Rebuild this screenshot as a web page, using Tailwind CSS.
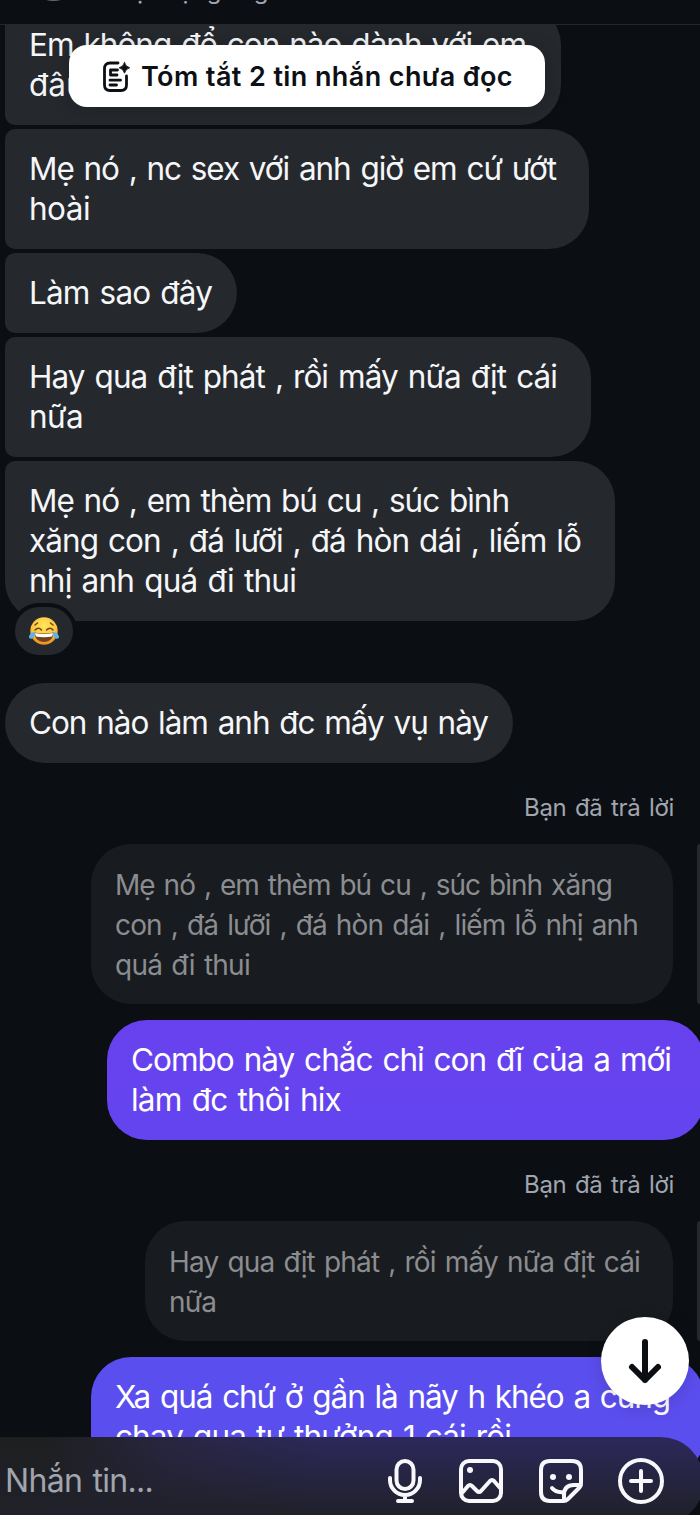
<!DOCTYPE html>
<html lang="vi">
<head>
<meta charset="utf-8">
<meta name="viewport" content="width=device-width, initial-scale=1">
<title>Tin nhắn</title>
<script src="https://cdn.jsdelivr.net/npm/@tailwindcss/browser@4"></script>
</head>
<body class="relative flex h-[1515px] w-[700px] flex-col overflow-hidden bg-[#0b0f14] font-['Inter','Noto_Sans',sans-serif] text-[31.5px] leading-[40px] [word-spacing:2px] text-[#f5f6f8]">
<header class="relative h-[25px] shrink-0 overflow-hidden border-b border-[#24282d]">
  <div class="absolute left-[26px] -top-[54px] size-[55px] rounded-full bg-[#656b6c]"></div>
  <div class="absolute left-[101px] -top-[25px] text-[24px] leading-[32px] whitespace-nowrap text-[#a0a5ae]">Hoạt động 2 giờ trước</div>
</header>

<main class="relative min-h-0 flex-1 overflow-hidden">
  <div class="-mt-5 flex flex-col items-start gap-1 pl-[5px]">
    <div class="h-[120px] w-[556px] rounded-l-[10px] rounded-r-[40px] bg-[#25282d] py-5 pl-[24px] whitespace-nowrap"><span data-w="497">Em không để con nào dành với em</span><br><span>đâu</span></div>
    <div class="h-[120px] w-[584px] rounded-l-[10px] rounded-r-[40px] bg-[#25282d] py-5 pl-[24px] whitespace-nowrap"><span data-w="527">Mẹ nó , nc sex với anh giờ em cứ ướt</span><br><span data-w="61">hoài</span></div>
    <div class="h-[80px] w-[232px] rounded-l-[10px] rounded-r-[40px] bg-[#25282d] py-5 pl-[24px] whitespace-nowrap"><span data-w="183">Làm sao đây</span></div>
    <div class="h-[120px] w-[586px] rounded-l-[10px] rounded-r-[40px] bg-[#25282d] py-5 pl-[24px] whitespace-nowrap"><span data-w="528">Hay qua địt phát , rồi mấy nữa địt cái</span><br><span data-w="54">nữa</span></div>
    <div class="relative h-[160px] w-[610px] rounded-[40px] rounded-tl-[10px] bg-[#25282d] py-5 pl-[24px] whitespace-nowrap"><span data-w="480">Mẹ nó , em thèm bú cu , súc bình</span><br><span data-w="552">xăng con , đá lưỡi , đá hòn dái , liếm lỗ</span><br><span data-w="267">nhị anh quá đi thui</span>
      <div class="absolute left-[6px] top-[142px] flex h-[56px] w-[66px] items-center justify-center rounded-[28px] border-4 border-[#0b0f14] bg-[#25282d]">
        <svg class="h-[30px] w-[32px]" viewBox="0 0 32 30">
          <defs><radialGradient id="face" cx=".5" cy=".3" r=".7"><stop offset="0" stop-color="#ffe75c"/><stop offset=".65" stop-color="#fbc43e"/><stop offset="1" stop-color="#e68a22"/></radialGradient></defs>
          <circle cx="16" cy="15" r="13.7" fill="url(#face)"/>
          <path d="M7 9l2.5-2M25 9l-2.5-2M7 14q3.5-3.5 6.5 0M18.500 14q3.500-3.500 6.500 0" fill="none" stroke="#744315" stroke-width="1.500" stroke-linecap="round"/>
          <path d="M6.500 16.500q9.500 2 19 0c0 6-4 9.500-9.500 9.500s-9.500-3.500-9.500-9.500z" fill="#75401c"/>
          <path d="M7 17q9 2 18 0l-.8 3.500q-8.200 1.500-16.400 0z" fill="#fff"/>
          <path d="M7 16c-3 0-6 2.500-6 5 0 2 3 2.500 4.300.8C6.400 20.300 7 18.500 7 16zM25 16c3 0 6 2.500 6 5 0 2-3 2.500-4.300.8C25.600 20.300 25 18.500 25 16z" fill="#56b5ef"/>
        </svg>
      </div>
    </div>
    <div class="mt-[58px] h-[80px] w-[508px] rounded-[40px] bg-[#25282d] py-5 pl-[24px] whitespace-nowrap"><span data-w="459">Con nào làm anh đc mấy vụ này</span></div>
  </div>

  <div class="flex flex-col items-end">
    <div class="mt-[29px] mr-[26px] h-[32px] text-[24px] leading-[32px] whitespace-nowrap text-[#a0a5ae]"><span data-w="150">Bạn đã trả lời</span></div>
    <div class="mt-5 flex gap-6">
      <div class="h-[160px] w-[582px] rounded-[40px] bg-[#181b1f] py-[21px] pl-[24px] text-[28px] whitespace-nowrap text-[#8b8d90]"><span data-w="497">Mẹ nó , em thèm bú cu , súc bình xăng</span><br><span data-w="523">con , đá lưỡi , đá hòn dái , liếm lỗ nhị anh</span><br><span data-w="135">quá đi thui</span></div>
      <div class="h-[160px] w-[3px] rounded-l-[3px] bg-[#25282c]"></div>
    </div>
    <div class="mt-4 -mr-[4px] h-[120px] w-[597px] rounded-[40px] bg-linear-to-b from-[#6841ee] to-[#6345f0] py-5 pl-[24px] whitespace-nowrap text-white"><span data-w="540">Combo này chắc chỉ con đĩ của a mới</span><br><span data-w="210">làm đc thôi hix</span></div>
    <div class="mt-[29px] mr-[26px] h-[32px] text-[24px] leading-[32px] whitespace-nowrap text-[#a0a5ae]"><span data-w="150">Bạn đã trả lời</span></div>
    <div class="mt-5 flex gap-6">
      <div class="h-[120px] w-[528px] rounded-[40px] bg-[#181b1f] py-[21px] pl-[24px] text-[28px] whitespace-nowrap text-[#8b8d90]"><span data-w="471">Hay qua địt phát , rồi mấy nữa địt cái</span><br><span data-w="47">nữa</span></div>
      <div class="h-[120px] w-[3px] rounded-l-[3px] bg-[#25282c]"></div>
    </div>
    <div class="mt-4 -mr-[4px] h-[120px] w-[613px] shrink-0 rounded-[40px] bg-[#5b4eee] py-5 pl-[24px] whitespace-nowrap text-white"><span data-w="555">Xa quá chứ ở gần là nãy h khéo a cũng</span><br><span data-w="396">chạy qua tự thưởng 1 cái rồi</span></div>
  </div>
</main>

<!-- Unread summary -->
<button class="absolute left-[69px] top-[45px] flex h-[62px] w-[476px] items-center rounded-[18px] bg-white pt-px pl-[33px] text-[27px] leading-8 font-semibold whitespace-nowrap text-[#0c1014] shadow-[0_2px_20px_rgba(0,0,0,0.2)]">
  <svg class="mr-[9px] h-[32px] w-[30px] shrink-0" viewBox="0 0 30 32" fill="none" stroke="#0c1014" stroke-width="2.800" stroke-linecap="round" stroke-linejoin="round">
    <path d="M16 2H8Q2.500 2 2.500 7.500v16.500q0 5.500 5.500 5.500h11q5.500 0 5.500-5.500V15"/>
    <path d="M15.500 9H8.500v5H15M8 19.200h10.500M8 24h6.500"/>
    <path d="M22.500 1.500q1 4.200 5.300 5.300-4.300 1.100-5.300 5.400-1.100-4.300-5.400-5.400 4.300-1.100 5.400-5.300z" fill="#0c1014" stroke-width=".8"/>
  </svg>
  <span data-w="372">Tóm tắt 2 tin nhắn chưa đọc</span>
</button>

<!-- Scroll to latest -->
<button class="absolute left-[601px] top-[1317px] flex size-[88px] items-center justify-center rounded-full bg-white shadow-[0_3px_18px_rgba(0,0,0,0.15)]">
  <svg class="size-[48px]" viewBox="0 0 48 48" fill="none" stroke="#0b0f14" stroke-width="6" stroke-linecap="round" stroke-linejoin="round"><path d="M24 5v38M11 30l13 13 13-13"/></svg>
</button>

<!-- Composer -->
<footer class="absolute -left-[40px] top-[1437px] flex h-[88px] w-[744px] items-start overflow-hidden rounded-[44px] bg-[linear-gradient(to_bottom,transparent,#20212a_88%),linear-gradient(to_right,#1e1f20_90px,#292644_220px,#2c285b_360px)] pl-[45px]">
  <div class="mt-[24px] w-[382px] text-[32px] whitespace-nowrap text-[#a0a5ae]"><span data-w="148">Nhắn tin...</span></div>
  <svg class="mt-[20px] h-[48px] w-[36px] shrink-0" viewBox="0 0 36 48" fill="none" stroke="#f8f8fc" stroke-width="4" stroke-linecap="round"><rect x="9.500" y="4" width="17" height="28" rx="8.500"/><path d="M3 21v2a15 15 0 0 0 30 0v-2M18 39v5M11 44h14"/></svg>
  <svg class="mt-[20px] ml-[34px] size-[48px] shrink-0" viewBox="0 0 48 48" fill="none" stroke="#f8f8fc" stroke-width="4" stroke-linecap="round" stroke-linejoin="round"><rect x="4" y="4" width="40" height="40" rx="8"/><circle cx="13" cy="13" r="3" fill="#f8f8fc" stroke="none"/><path d="M5 36l6-7q2-2 4 0l5 5q2 2 4 0l9-10q2-2 4 0l7 8"/></svg>
  <svg class="mt-[20px] ml-[32px] size-[48px] shrink-0" viewBox="0 0 48 48" fill="none" stroke="#f8f8fc" stroke-width="4" stroke-linecap="round" stroke-linejoin="round"><path d="M26 44H13q-9 0-9-9V13q0-9 9-9h22q9 0 9 9v13q0 3-2 5L31 42q-2 2-5 2zM27 43v-5q0-10 10-10h7M15 31q4 5 12 4"/><circle cx="16" cy="20" r="3" fill="#f8f8fc" stroke="none"/><circle cx="32" cy="20" r="3" fill="#f8f8fc" stroke="none"/></svg>
  <svg class="mt-[20px] ml-[32px] size-[48px] shrink-0" viewBox="0 0 48 48" fill="none" stroke="#f8f8fc" stroke-width="4" stroke-linecap="round"><circle cx="24" cy="24" r="21"/><path d="M24 14v20M14 24h20"/></svg>
</footer>

<script>
// Even out tracking so every line keeps its intended measure.
function fitLines() {
  document.querySelectorAll('[data-w]').forEach(function (el) {
    el.style.letterSpacing = '0px';
    var gap = Number(el.dataset.w) - el.getBoundingClientRect().width;
    el.style.letterSpacing = (gap / el.textContent.length) + 'px';
  });
}
window.addEventListener('load', fitLines);
document.fonts.ready.then(fitLines);
new ResizeObserver(fitLines).observe(document.body);
</script>
</body>
</html>
